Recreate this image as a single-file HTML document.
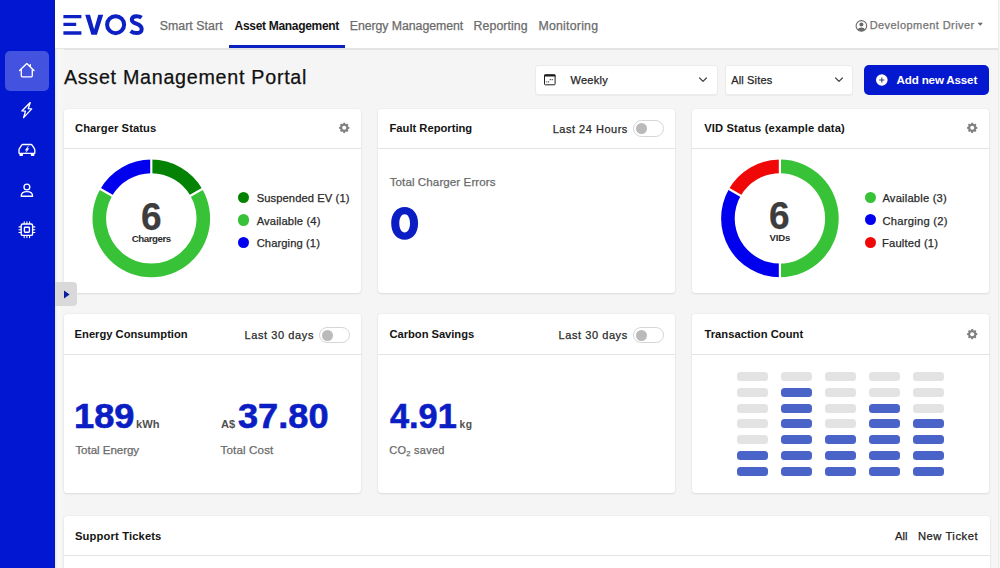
<!DOCTYPE html><html><head><meta charset="utf-8"><style>
*{margin:0;padding:0;box-sizing:border-box}
html,body{width:1000px;height:568px;overflow:hidden;background:#f5f5f5;font-family:"Liberation Sans",sans-serif}
.t{position:absolute;white-space:nowrap;line-height:1}
.t.n{-webkit-text-stroke:0.25px currentColor}
.t.d{-webkit-text-stroke:0.6px currentColor}
.t.d6{-webkit-text-stroke:0.25px currentColor}
.abs{position:absolute}
.card{position:absolute;background:#fff;border-radius:3px;box-shadow:0 1px 2px rgba(0,0,0,0.09),0 0 1.5px rgba(0,0,0,0.10)}
.div{position:absolute;height:1px;background:#e3e3e3}
.tog{position:absolute;width:31px;height:16.5px;border:1px solid #d6d6d6;border-radius:8.5px;background:#fff}
.tog i{position:absolute;left:2px;top:2.1px;width:11px;height:11px;border-radius:50%;background:#bababa}
.sel{position:absolute;background:#fff;border:1px solid #ebebeb;border-radius:3px;box-shadow:0 1px 1px rgba(0,0,0,0.04)}
</style></head><body>
<div class="abs" style="left:997.7px;top:0;width:1px;height:568px;background:#ececec"></div>
<div class="abs" style="left:55px;top:0;width:943px;height:48px;background:#fff"></div>
<div class="abs" style="left:55px;top:48px;width:943px;height:1.5px;background:#e4e4e4"></div>
<div class="abs" style="left:0;top:0;width:55px;height:568px;background:#0217d2"></div>
<div class="abs" style="left:53.8px;top:0;width:1.2px;height:568px;background:#0a1aa0"></div>
<div class="abs" style="left:55px;top:49px;width:9px;height:519px;background:linear-gradient(90deg,#dae4fd 0,#eef1fb 1.5px,#f7f7f8 3px,#f6f6f4 8px,#f4f4f4 9px)"></div>
<div class="abs" style="left:4.5px;top:50.5px;width:44.5px;height:40.3px;border-radius:5px;background:#4353e0"></div>
<svg class="abs" style="left:0;top:0" width="55" height="250" viewBox="0 0 55 250" fill="none" stroke="#fff" stroke-width="1.35" stroke-linecap="round" stroke-linejoin="round">
<path d="M19.6 70.6 L26.8 63.6 L34 70.6 M21.3 69.2 V75.8 Q21.3 76.8 22.3 76.8 H31.3 Q32.3 76.8 32.3 75.8 V69.2 M30.3 66.6 V64.6"/>
<path d="M30.2 102.6 L21.9 110.9 L25.5 111.1 L23.6 117.6 L31.7 108.9 L28.2 108.7 Z"/>
<path d="M19 152.9 V150.2 Q19 149.4 19.4 148.7 L21.7 145.1 Q22.1 144.5 22.8 144.5 H31 Q31.7 144.5 32.1 145.1 L34.4 148.7 Q34.8 149.4 34.8 150.2 V152.9 Q34.8 153.3 34.4 153.3 H19.4 Q19 153.3 19 152.9 Z"/>
<rect x="19.4" y="153" width="3.6" height="3.1" rx="0.8" fill="#fff" stroke="none"/><rect x="30.8" y="153" width="3.6" height="3.1" rx="0.8" fill="#fff" stroke="none"/>
<path d="M28.3 146.2 L25.2 150.2 H26.9 L25.9 152.6 L28.9 148.6 H27.2 Z" fill="#fff" stroke-width="0.4"/>
<circle cx="26.9" cy="187" r="2.9"/>
<path d="M21.2 196.2 Q21.2 191.6 26.9 191.6 Q32.6 191.6 32.6 196.2 Z"/>
<rect x="21.2" y="224" width="11.4" height="11.4" rx="1.5"/>
<rect x="24.4" y="227.2" width="5" height="5" rx="0.6"/>
<path d="M24.2 221.8 V223.6 M26.9 221.8 V223.6 M29.6 221.8 V223.6 M24.2 235.8 V237.6 M26.9 235.8 V237.6 M29.6 235.8 V237.6 M19 226.9 H20.8 M19 229.7 H20.8 M19 232.5 H20.8 M33 226.9 H34.8 M33 229.7 H34.8 M33 232.5 H34.8" stroke-width="1.1"/>
</svg>
<div class="abs" style="z-index:5;left:55px;top:282px;width:22px;height:24px;border-radius:0 4px 4px 0;background:#d9d9d9"></div>
<svg class="abs" style="z-index:6;left:55px;top:282px" width="22" height="24"><path d="M9 8.6 L14.6 12.5 L9 16.4 Z" fill="#0d1f9e"/></svg>
<svg class="abs" style="left:0;top:0" width="150" height="48" viewBox="0 0 150 48">
<g fill="#0d20c4">
<rect x="63.4" y="14.9" width="18" height="3.3" rx="0.3"/>
<rect x="63.4" y="22.7" width="12.8" height="3.3" rx="0.3"/>
<rect x="63.4" y="31.3" width="18" height="3.4" rx="0.3"/>
<path d="M85.2 14.8 H90 L94.15 29.3 L98.3 14.8 H103.2 L96.9 34.8 H91.4 Z"/>
</g>
<circle cx="115.6" cy="24.65" r="8.5" fill="none" stroke="#0d20c4" stroke-width="4"/>
<path d="M141.6 17.6 C140.2 16.6 138.6 16.2 136.6 16.2 C133.6 16.2 131.8 17.6 131.8 19.8 C131.8 24.8 141.7 22.6 141.7 29.2 C141.7 31.6 139.6 33.1 136.5 33.1 C134.1 33.1 132.2 32.4 130.6 31.2" fill="none" stroke="#0d20c4" stroke-width="4"/>
</svg>
<div class="t n" style="left:159.7px;top:20px;font-size:12.3px;color:#6b6b6b;font-weight:400;letter-spacing:0.07px;">Smart Start</div>
<div class="t" style="left:234.6px;top:20px;font-size:12.0px;color:#141414;font-weight:700;letter-spacing:-0.307px;">Asset Management</div>
<div class="abs" style="left:228.5px;top:45px;width:116.5px;height:3px;background:#0c22c0"></div>
<div class="t n" style="left:349.8px;top:20px;font-size:12.3px;color:#6b6b6b;font-weight:400;letter-spacing:-0.05px;">Energy Management</div>
<div class="t n" style="left:473.6px;top:20px;font-size:12.3px;color:#6b6b6b;font-weight:400;letter-spacing:0.087px;">Reporting</div>
<div class="t n" style="left:538.5px;top:20px;font-size:12.3px;color:#6b6b6b;font-weight:400;letter-spacing:0.233px;">Monitoring</div>
<svg class="abs" style="left:855px;top:19.5px" width="13" height="13" viewBox="0 0 13 13">
<circle cx="6.4" cy="5.9" r="5.3" fill="none" stroke="#6a6a6a" stroke-width="1.1"/>
<circle cx="6.4" cy="4.6" r="2" fill="#6a6a6a"/>
<path d="M2.6 9.6 Q3.6 7.4 6.4 7.4 Q9.2 7.4 10.2 9.6 Q8.8 11.2 6.4 11.2 Q4 11.2 2.6 9.6 Z" fill="#6a6a6a"/>
</svg>
<div class="t n" style="left:869.7px;top:20px;font-size:11.0px;color:#737373;font-weight:400;letter-spacing:0.429px;">Development Driver</div>
<svg class="abs" style="left:977px;top:22px" width="7" height="5"><path d="M0.6 0.8 H5.9 L3.25 3.8 Z" fill="#6a6a6a"/></svg>
<div class="t n" style="left:63.9px;top:68px;font-size:19.71px;color:#111111;font-weight:400;letter-spacing:0.727px;">Asset Management Portal</div>
<div class="sel" style="left:535px;top:65px;width:182.5px;height:29.5px"></div>
<svg class="abs" style="left:543px;top:73px" width="14" height="14" viewBox="0 0 14 14">
<rect x="1.5" y="1.8" width="10.6" height="10" rx="0.9" fill="none" stroke="#1e1e1e" stroke-width="1"/>
<rect x="1.2" y="1.4" width="11.2" height="2.2" rx="0.6" fill="#1e1e1e"/>
<path d="M3.3 8.9 h1 M5.1 8.9 h1 M7.3 6.1 v1.1 M9.2 6.1 v1.1" stroke="#1e1e1e" stroke-width="1"/>
</svg>
<div class="t n" style="left:570.5px;top:75px;font-size:11.0px;color:#262626;font-weight:400;letter-spacing:0.28px;">Weekly</div>
<svg class="abs" style="left:697px;top:75px" width="12" height="10"><path d="M2.6 3 L6 6.4 L9.4 3" fill="none" stroke="#444" stroke-width="1.2" stroke-linecap="round" stroke-linejoin="round"/></svg>
<div class="sel" style="left:724.5px;top:65px;width:128px;height:29.5px"></div>
<div class="t n" style="left:731.2px;top:75px;font-size:11.0px;color:#262626;font-weight:400;letter-spacing:0.162px;">All Sites</div>
<svg class="abs" style="left:832.5px;top:75px" width="12" height="10"><path d="M2.6 3 L6 6.4 L9.4 3" fill="none" stroke="#444" stroke-width="1.2" stroke-linecap="round" stroke-linejoin="round"/></svg>
<div class="abs" style="left:864.4px;top:65px;width:125px;height:29.5px;border-radius:5px;background:#0419cf"></div>
<svg class="abs" style="left:875px;top:73px" width="14" height="14"><circle cx="6.8" cy="7" r="5.8" fill="#fff"/><path d="M6.8 4.4 V9.6 M4.2 7 H9.4" stroke="#3a3f6a" stroke-width="1.1"/></svg>
<div class="t" style="left:896.6px;top:74px;font-size:11.6px;color:#ffffff;font-weight:700;letter-spacing:-0.167px;">Add new Asset</div>
<div class="card" style="left:64px;top:108.5px;width:297px;height:184px"></div>
<div class="div" style="left:64px;top:148px;width:297px"></div>
<div class="card" style="left:64px;top:314.4px;width:297px;height:178.6px"></div>
<div class="div" style="left:64px;top:354px;width:297px"></div>
<div class="card" style="left:378px;top:108.5px;width:297px;height:184px"></div>
<div class="div" style="left:378px;top:148px;width:297px"></div>
<div class="card" style="left:378px;top:314.4px;width:297px;height:178.6px"></div>
<div class="div" style="left:378px;top:354px;width:297px"></div>
<div class="card" style="left:692px;top:108.5px;width:297px;height:184px"></div>
<div class="div" style="left:692px;top:148px;width:297px"></div>
<div class="card" style="left:692px;top:314.4px;width:297px;height:178.6px"></div>
<div class="div" style="left:692px;top:354px;width:297px"></div>
<div class="card" style="left:64px;top:515.5px;width:925.5px;height:60px"></div>
<div class="div" style="left:64px;top:555px;width:925.5px"></div>
<div class="t" style="left:75.0px;top:123px;font-size:11.2px;color:#141414;font-weight:700;letter-spacing:0.077px;">Charger Status</div>
<div class="t" style="left:389.5px;top:123px;font-size:11.2px;color:#141414;font-weight:700;letter-spacing:0.0px;">Fault Reporting</div>
<div class="t" style="left:704.2px;top:123px;font-size:11.2px;color:#141414;font-weight:700;letter-spacing:0.133px;">VID Status (example data)</div>
<div class="t" style="left:74.6px;top:329px;font-size:11.2px;color:#141414;font-weight:700;letter-spacing:-0.006px;">Energy Consumption</div>
<div class="t" style="left:389.5px;top:329px;font-size:11.2px;color:#141414;font-weight:700;letter-spacing:-0.038px;">Carbon Savings</div>
<div class="t" style="left:704.4px;top:329px;font-size:11.2px;color:#141414;font-weight:700;letter-spacing:0.038px;">Transaction Count</div>
<div class="t" style="left:75.0px;top:531px;font-size:11.2px;color:#141414;font-weight:700;letter-spacing:0.143px;">Support Tickets</div>
<svg class="abs" style="left:0;top:0;overflow:visible" width="1" height="1"><path d="M343.12 123.74 L343.32 122.67 L345.08 122.67 L345.28 123.74 L345.77 124.01 L346.31 124.17 L347.20 123.55 L348.45 124.80 L347.83 125.69 L347.99 126.23 L348.26 126.72 L349.33 126.92 L349.33 128.68 L348.26 128.88 L347.99 129.37 L347.83 129.91 L348.45 130.80 L347.20 132.05 L346.31 131.43 L345.77 131.59 L345.28 131.86 L345.08 132.93 L343.32 132.93 L343.12 131.86 L342.63 131.59 L342.09 131.43 L341.20 132.05 L339.95 130.80 L340.57 129.91 L340.41 129.37 L340.14 128.88 L339.07 128.68 L339.07 126.92 L340.14 126.72 L340.41 126.23 L340.57 125.69 L339.95 124.80 L341.20 123.55 L342.09 124.17 L342.63 124.01 Z" fill="#808080"/><circle cx="344.2" cy="127.8" r="2.0" fill="#fff"/></svg>
<svg class="abs" style="left:0;top:0;overflow:visible" width="1" height="1"><path d="M971.12 123.74 L971.32 122.67 L973.08 122.67 L973.28 123.74 L973.77 124.01 L974.31 124.17 L975.20 123.55 L976.45 124.80 L975.83 125.69 L975.99 126.23 L976.26 126.72 L977.33 126.92 L977.33 128.68 L976.26 128.88 L975.99 129.37 L975.83 129.91 L976.45 130.80 L975.20 132.05 L974.31 131.43 L973.77 131.59 L973.28 131.86 L973.08 132.93 L971.32 132.93 L971.12 131.86 L970.63 131.59 L970.09 131.43 L969.20 132.05 L967.95 130.80 L968.57 129.91 L968.41 129.37 L968.14 128.88 L967.07 128.68 L967.07 126.92 L968.14 126.72 L968.41 126.23 L968.57 125.69 L967.95 124.80 L969.20 123.55 L970.09 124.17 L970.63 124.01 Z" fill="#808080"/><circle cx="972.2" cy="127.8" r="2.0" fill="#fff"/></svg>
<svg class="abs" style="left:0;top:0;overflow:visible" width="1" height="1"><path d="M971.12 330.14 L971.32 329.07 L973.08 329.07 L973.28 330.14 L973.77 330.41 L974.31 330.57 L975.20 329.95 L976.45 331.20 L975.83 332.09 L975.99 332.63 L976.26 333.12 L977.33 333.32 L977.33 335.08 L976.26 335.28 L975.99 335.77 L975.83 336.31 L976.45 337.20 L975.20 338.45 L974.31 337.83 L973.77 337.99 L973.28 338.26 L973.08 339.33 L971.32 339.33 L971.12 338.26 L970.63 337.99 L970.09 337.83 L969.20 338.45 L967.95 337.20 L968.57 336.31 L968.41 335.77 L968.14 335.28 L967.07 335.08 L967.07 333.32 L968.14 333.12 L968.41 332.63 L968.57 332.09 L967.95 331.20 L969.20 329.95 L970.09 330.57 L970.63 330.41 Z" fill="#808080"/><circle cx="972.2" cy="334.2" r="2.0" fill="#fff"/></svg>
<div class="t n" style="left:552.7px;top:124px;font-size:11.0px;color:#2a2a2a;font-weight:400;letter-spacing:0.517px;">Last 24 Hours</div>
<div class="tog" style="left:633px;top:120.4px"><i></i></div>
<div class="t n" style="left:244.5px;top:330px;font-size:11.0px;color:#2a2a2a;font-weight:400;letter-spacing:0.591px;">Last 30 days</div>
<div class="tog" style="left:318.8px;top:326.5px"><i></i></div>
<div class="t n" style="left:558.6px;top:330px;font-size:11.0px;color:#2a2a2a;font-weight:400;letter-spacing:0.564px;">Last 30 days</div>
<div class="tog" style="left:633px;top:326.5px"><i></i></div>
<svg class="abs" style="left:0;top:0;overflow:visible" width="1" height="1"><path d="M151.30 159.60 A58.8 58.8 0 0 1 202.22 189.00 L190.44 195.80 A45.2 45.2 0 0 0 151.30 173.20 Z" fill="#038203"/><path d="M202.22 189.00 A58.8 58.8 0 1 1 100.38 189.00 L112.16 195.80 A45.2 45.2 0 1 0 190.44 195.80 Z" fill="#37c237"/><path d="M100.38 189.00 A58.8 58.8 0 0 1 151.30 159.60 L151.30 173.20 A45.2 45.2 0 0 0 112.16 195.80 Z" fill="#0000ee"/><path d="M151.30 174.20 L151.30 158.60" stroke="#fff" stroke-width="2.2"/><path d="M189.58 196.30 L203.09 188.50" stroke="#fff" stroke-width="2.2"/><path d="M113.02 196.30 L99.51 188.50" stroke="#fff" stroke-width="2.2"/></svg>
<svg class="abs" style="left:0;top:0;overflow:visible" width="1" height="1"><path d="M779.90 159.60 A58.8 58.8 0 0 1 779.90 277.20 L779.90 263.60 A45.2 45.2 0 0 0 779.90 173.20 Z" fill="#37c237"/><path d="M779.90 277.20 A58.8 58.8 0 0 1 728.98 189.00 L740.76 195.80 A45.2 45.2 0 0 0 779.90 263.60 Z" fill="#0000ee"/><path d="M728.98 189.00 A58.8 58.8 0 0 1 779.90 159.60 L779.90 173.20 A45.2 45.2 0 0 0 740.76 195.80 Z" fill="#f00808"/><path d="M779.90 174.20 L779.90 158.60" stroke="#fff" stroke-width="2.2"/><path d="M779.90 262.60 L779.90 278.20" stroke="#fff" stroke-width="2.2"/><path d="M741.62 196.30 L728.11 188.50" stroke="#fff" stroke-width="2.2"/></svg>
<div class="t d6" style="left:140.6px;top:198px;font-size:38.0px;color:#3d3d3d;font-weight:700;letter-spacing:0.0px;transform-origin:0 0;transform:scaleX(0.975);">6</div>
<div class="t" style="left:131.8px;top:234px;font-size:9.7px;color:#2b2b2b;font-weight:700;letter-spacing:-0.45px;">Chargers</div>
<div class="t d6" style="left:768.9px;top:197px;font-size:38.0px;color:#3d3d3d;font-weight:700;letter-spacing:0.0px;transform-origin:0 0;transform:scaleX(0.975);">6</div>
<div class="t" style="left:769.6px;top:233px;font-size:9.6px;color:#2b2b2b;font-weight:700;letter-spacing:-0.167px;">VIDs</div>
<div class="abs" style="left:237.90px;top:192.10px;width:11.2px;height:11.2px;border-radius:50%;background:#038203"></div>
<div class="t n" style="left:256.7px;top:193px;font-size:11.2px;color:#2a2a2a;font-weight:400;letter-spacing:0.087px;">Suspended EV (1)</div>
<div class="abs" style="left:237.90px;top:214.45px;width:11.2px;height:11.2px;border-radius:50%;background:#37c237"></div>
<div class="t n" style="left:256.7px;top:216px;font-size:11.2px;color:#2a2a2a;font-weight:400;letter-spacing:0.142px;">Available (4)</div>
<div class="abs" style="left:237.90px;top:236.80px;width:11.2px;height:11.2px;border-radius:50%;background:#0000ee"></div>
<div class="t n" style="left:256.7px;top:238px;font-size:11.2px;color:#2a2a2a;font-weight:400;letter-spacing:0.091px;">Charging (1)</div>
<div class="abs" style="left:865.00px;top:191.90px;width:11.2px;height:11.2px;border-radius:50%;background:#37c237"></div>
<div class="t n" style="left:882.4px;top:193px;font-size:11.2px;color:#2a2a2a;font-weight:400;letter-spacing:0.2px;">Available (3)</div>
<div class="abs" style="left:865.00px;top:214.25px;width:11.2px;height:11.2px;border-radius:50%;background:#0000ee"></div>
<div class="t n" style="left:882.4px;top:216px;font-size:11.2px;color:#2a2a2a;font-weight:400;letter-spacing:0.273px;">Charging (2)</div>
<div class="abs" style="left:865.00px;top:236.60px;width:11.2px;height:11.2px;border-radius:50%;background:#f00808"></div>
<div class="t n" style="left:882.0px;top:238px;font-size:11.2px;color:#2a2a2a;font-weight:400;letter-spacing:0.19px;">Faulted (1)</div>
<div class="t n" style="left:389.7px;top:176px;font-size:11.6px;color:#6a6a6a;font-weight:400;letter-spacing:0.079px;">Total Charger Errors</div>
<svg class="abs" style="left:0;top:0;overflow:visible" width="1" height="1"><path fill-rule="evenodd" fill="#0b1ec4" d="M391.2 223.35 C391.2 213.2 396.8 206.9 404.65 206.9 C412.5 206.9 418.1 213.2 418.1 223.35 C418.1 233.5 412.5 239.8 404.65 239.8 C396.8 239.8 391.2 233.5 391.2 223.35 Z M399.3 223.35 C399.3 229 401.5 232.4 404.65 232.4 C407.8 232.4 410.0 229 410.0 223.35 C410.0 217.7 407.8 214.3 404.65 214.3 C401.5 214.3 399.3 217.7 399.3 223.35 Z"/></svg>
<div class="t d" style="left:74.30000000000001px;top:399px;font-size:34.3px;color:#0b1ec4;font-weight:700;letter-spacing:0.0px;transform-origin:0 0;transform:scaleX(1.058);">189</div>
<div class="t" style="left:135.6px;top:420px;font-size:10.3px;color:#505050;font-weight:700;letter-spacing:0.0px;transform-origin:0 0;transform:scaleX(1.08);">kWh</div>
<div class="t" style="left:220.6px;top:420px;font-size:10.3px;color:#505050;font-weight:700;letter-spacing:0.0px;transform-origin:0 0;transform:scaleX(1.08);">A$</div>
<div class="t d" style="left:237.5px;top:399px;font-size:34.3px;color:#0b1ec4;font-weight:700;letter-spacing:0.0px;transform-origin:0 0;transform:scaleX(1.055);">37.80</div>
<div class="t n" style="left:75.4px;top:444px;font-size:11.6px;color:#6a6a6a;font-weight:400;letter-spacing:-0.064px;">Total Energy</div>
<div class="t n" style="left:220.6px;top:444px;font-size:11.6px;color:#6a6a6a;font-weight:400;letter-spacing:0.133px;">Total Cost</div>
<div class="t d" style="left:390.3px;top:399px;font-size:34.8px;color:#0b1ec4;font-weight:700;letter-spacing:0.0px;transform-origin:0 0;transform:scaleX(0.985);">4.91</div>
<div class="t" style="left:459.5px;top:420px;font-size:10.3px;color:#505050;font-weight:700;letter-spacing:0.6px;">kg</div>
<div class="t n" style="left:389.2px;top:445px;font-size:11.0px;color:#6a6a6a;font-weight:400;letter-spacing:0.275px;">CO<span style="font-size:0.68em;position:relative;top:0.22em">2</span> saved</div>
<div class="abs" style="left:736.90px;top:371.90px;width:31.2px;height:9px;border-radius:3.5px;background:#e3e3e3"></div>
<div class="abs" style="left:736.90px;top:387.75px;width:31.2px;height:9px;border-radius:3.5px;background:#e3e3e3"></div>
<div class="abs" style="left:736.90px;top:403.60px;width:31.2px;height:9px;border-radius:3.5px;background:#e3e3e3"></div>
<div class="abs" style="left:736.90px;top:419.45px;width:31.2px;height:9px;border-radius:3.5px;background:#e3e3e3"></div>
<div class="abs" style="left:736.90px;top:435.30px;width:31.2px;height:9px;border-radius:3.5px;background:#e3e3e3"></div>
<div class="abs" style="left:736.90px;top:451.15px;width:31.2px;height:9px;border-radius:3.5px;background:#4a63c9"></div>
<div class="abs" style="left:736.90px;top:467.00px;width:31.2px;height:9px;border-radius:3.5px;background:#4a63c9"></div>
<div class="abs" style="left:780.80px;top:371.90px;width:31.2px;height:9px;border-radius:3.5px;background:#e3e3e3"></div>
<div class="abs" style="left:780.80px;top:387.75px;width:31.2px;height:9px;border-radius:3.5px;background:#4a63c9"></div>
<div class="abs" style="left:780.80px;top:403.60px;width:31.2px;height:9px;border-radius:3.5px;background:#4a63c9"></div>
<div class="abs" style="left:780.80px;top:419.45px;width:31.2px;height:9px;border-radius:3.5px;background:#4a63c9"></div>
<div class="abs" style="left:780.80px;top:435.30px;width:31.2px;height:9px;border-radius:3.5px;background:#4a63c9"></div>
<div class="abs" style="left:780.80px;top:451.15px;width:31.2px;height:9px;border-radius:3.5px;background:#4a63c9"></div>
<div class="abs" style="left:780.80px;top:467.00px;width:31.2px;height:9px;border-radius:3.5px;background:#4a63c9"></div>
<div class="abs" style="left:824.70px;top:371.90px;width:31.2px;height:9px;border-radius:3.5px;background:#e3e3e3"></div>
<div class="abs" style="left:824.70px;top:387.75px;width:31.2px;height:9px;border-radius:3.5px;background:#e3e3e3"></div>
<div class="abs" style="left:824.70px;top:403.60px;width:31.2px;height:9px;border-radius:3.5px;background:#e3e3e3"></div>
<div class="abs" style="left:824.70px;top:419.45px;width:31.2px;height:9px;border-radius:3.5px;background:#e3e3e3"></div>
<div class="abs" style="left:824.70px;top:435.30px;width:31.2px;height:9px;border-radius:3.5px;background:#4a63c9"></div>
<div class="abs" style="left:824.70px;top:451.15px;width:31.2px;height:9px;border-radius:3.5px;background:#4a63c9"></div>
<div class="abs" style="left:824.70px;top:467.00px;width:31.2px;height:9px;border-radius:3.5px;background:#4a63c9"></div>
<div class="abs" style="left:868.60px;top:371.90px;width:31.2px;height:9px;border-radius:3.5px;background:#e3e3e3"></div>
<div class="abs" style="left:868.60px;top:387.75px;width:31.2px;height:9px;border-radius:3.5px;background:#e3e3e3"></div>
<div class="abs" style="left:868.60px;top:403.60px;width:31.2px;height:9px;border-radius:3.5px;background:#4a63c9"></div>
<div class="abs" style="left:868.60px;top:419.45px;width:31.2px;height:9px;border-radius:3.5px;background:#4a63c9"></div>
<div class="abs" style="left:868.60px;top:435.30px;width:31.2px;height:9px;border-radius:3.5px;background:#4a63c9"></div>
<div class="abs" style="left:868.60px;top:451.15px;width:31.2px;height:9px;border-radius:3.5px;background:#4a63c9"></div>
<div class="abs" style="left:868.60px;top:467.00px;width:31.2px;height:9px;border-radius:3.5px;background:#4a63c9"></div>
<div class="abs" style="left:912.50px;top:371.90px;width:31.2px;height:9px;border-radius:3.5px;background:#e3e3e3"></div>
<div class="abs" style="left:912.50px;top:387.75px;width:31.2px;height:9px;border-radius:3.5px;background:#e3e3e3"></div>
<div class="abs" style="left:912.50px;top:403.60px;width:31.2px;height:9px;border-radius:3.5px;background:#e3e3e3"></div>
<div class="abs" style="left:912.50px;top:419.45px;width:31.2px;height:9px;border-radius:3.5px;background:#4a63c9"></div>
<div class="abs" style="left:912.50px;top:435.30px;width:31.2px;height:9px;border-radius:3.5px;background:#4a63c9"></div>
<div class="abs" style="left:912.50px;top:451.15px;width:31.2px;height:9px;border-radius:3.5px;background:#4a63c9"></div>
<div class="abs" style="left:912.50px;top:467.00px;width:31.2px;height:9px;border-radius:3.5px;background:#4a63c9"></div>
<div class="t n" style="left:895.0px;top:531px;font-size:11.2px;color:#222222;font-weight:400;letter-spacing:0.0px;">All</div>
<div class="t n" style="left:918.0px;top:531px;font-size:11.2px;color:#222222;font-weight:400;letter-spacing:0.533px;">New Ticket</div>
</body></html>
